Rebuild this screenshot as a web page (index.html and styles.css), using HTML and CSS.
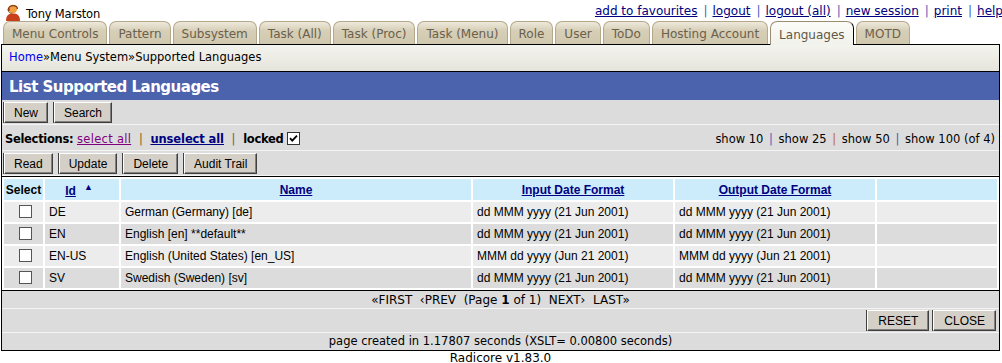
FILE: index.html
```html
<!DOCTYPE html>
<html>
<head>
<meta charset="utf-8">
<link rel="stylesheet" href="styles.css">
</head>
<body>
<div class="topbar">
  <div class="user">
    <svg class="usericon" width="16" height="18" viewBox="0 0 16 18">
      <path d="M1 18 C1 12 4 10.5 8 10.5 C12 10.5 15 12 15 18 Z" fill="#c8401a"/>
      <circle cx="8" cy="6" r="4.2" fill="#f0a040"/>
      <path d="M3.6 6 C3.6 1.5 12.4 1.5 12.4 6" fill="none" stroke="#8a3a10" stroke-width="1.3"/>
      <rect x="2.6" y="5.2" width="2" height="3" rx="0.8" fill="#8a3a10"/>
      <path d="M3.6 8 C4 10 6 10.5 7.5 10.2" fill="none" stroke="#8a3a10" stroke-width="0.9"/>
    </svg>
    <span class="uname">Tony Marston</span>
  </div>
  <div class="toplinks">
    <a href="#">add to favourites</a><span class="sep">|</span><a href="#">logout</a><span class="sep">|</span><a href="#">logout (all)</a><span class="sep">|</span><a href="#">new session</a><span class="sep">|</span><a href="#">print</a><span class="sep">|</span><a href="#">help</a>
  </div>
</div>
<div class="tabs">
  <span class="tab">Menu Controls</span>
  <span class="tab">Pattern</span>
  <span class="tab">Subsystem</span>
  <span class="tab">Task (All)</span>
  <span class="tab">Task (Proc)</span>
  <span class="tab">Task (Menu)</span>
  <span class="tab">Role</span>
  <span class="tab">User</span>
  <span class="tab">ToDo</span>
  <span class="tab">Hosting Account</span>
  <span class="tab active">Languages</span>
  <span class="tab">MOTD</span>
</div>
<div class="main">
  <div class="crumbs"><a href="#">Home</a>»Menu System»Supported Languages</div>
  <div class="panel">
    <div class="title">List Supported Languages</div>
    <div class="bar buttons">
      <button class="btn">New</button><button class="btn">Search</button>
    </div>
    <div class="bar selections">
      <div class="sel-left">
        <b>Selections:</b> <a href="#" class="visited">select all</a> <span class="sep">|</span> <a href="#" class="unsel">unselect all</a> <span class="sep">|</span> <b>locked</b>
        <span class="cb checked"><svg width="11" height="11" viewBox="0 0 11 11"><path d="M2 5.2 L4.3 7.6 L9 2.6" fill="none" stroke="#000" stroke-width="1.8"/></svg></span>
      </div>
      <div class="sel-right">show 10 <span class="sep">|</span> show 25 <span class="sep orange">|</span> show 50 <span class="sep">|</span> show 100 (of 4)</div>
    </div>
    <div class="bar buttons">
      <button class="btn">Read</button><button class="btn">Update</button><button class="btn">Delete</button><button class="btn">Audit Trail</button>
    </div>
    <table class="list">
      <colgroup>
        <col class="w-sel"><col class="w-id"><col class="w-name"><col class="w-fmt"><col class="w-fmt"><col>
      </colgroup>
      <thead>
        <tr>
          <th class="c-sel">Select</th>
          <th class="c-id"><a href="#">Id</a><span class="sort">▲</span></th>
          <th><a href="#">Name</a></th>
          <th><a href="#">Input Date Format</a></th>
          <th><a href="#">Output Date Format</a></th>
          <th></th>
        </tr>
      </thead>
      <tbody>
        <tr class="odd"><td class="c-sel"><span class="cb"></span></td><td>DE</td><td>German (Germany) [de]</td><td>dd MMM yyyy (21 Jun 2001)</td><td>dd MMM yyyy (21 Jun 2001)</td><td></td></tr>
        <tr class="even"><td class="c-sel"><span class="cb"></span></td><td>EN</td><td>English [en] **default**</td><td>dd MMM yyyy (21 Jun 2001)</td><td>dd MMM yyyy (21 Jun 2001)</td><td></td></tr>
        <tr class="odd"><td class="c-sel"><span class="cb"></span></td><td>EN-US</td><td>English (United States) [en_US]</td><td>MMM dd yyyy (Jun 21 2001)</td><td>MMM dd yyyy (Jun 21 2001)</td><td></td></tr>
        <tr class="even"><td class="c-sel"><span class="cb"></span></td><td>SV</td><td>Swedish (Sweden) [sv]</td><td>dd MMM yyyy (21 Jun 2001)</td><td>dd MMM yyyy (21 Jun 2001)</td><td></td></tr>
      </tbody>
    </table>
    <div class="bar pager">«FIRST&nbsp;&nbsp;‹PREV&nbsp;&nbsp;(Page <b>1</b> of 1)&nbsp;&nbsp;NEXT›&nbsp;&nbsp;LAST»</div>
    <div class="bar actions">
      <button class="btn">RESET</button><button class="btn">CLOSE</button>
    </div>
    <div class="bar timing">page created in 1.17807 seconds (XSLT= 0.00800 seconds)</div>
  </div>
</div>
<div class="version">Radicore v1.83.0</div>
</body>
</html>
```
FILE: styles.css
```css
* { box-sizing: border-box; }
body {
  margin: 0;
  padding: 0 2px 0 1px;
  background: #fff;
  font-family: "DejaVu Sans", Verdana, sans-serif;
  font-size: 11.5px;
  color: #000;
}
.topbar {
  display: flex;
  justify-content: space-between;
  align-items: flex-end;
  height: 21px;
}
.user {
  display: flex;
  align-items: center;
  gap: 5px;
  padding-left: 4px;
  font-size: 11.5px;
}
.uname { padding-top: 4px; letter-spacing: -0.2px; }
.usericon { display: block; }
.toplinks { font-size: 12px; padding-bottom: 3px; margin-right: -3px; }
.toplinks a { color: #000080; text-decoration: underline; }
.toplinks .sep { color: #4060c0; margin: 0 5px 0 6px; }

.tabs {
  display: flex;
  gap: 2px;
  padding-left: 2px;
  height: 24px;
  align-items: flex-end;
  border-bottom: 1px solid #000;
}
.tab {
  height: 23px;
  padding: 5px 8px 0 8px;
  font-size: 12px;
  color: #6b604c;
  background: linear-gradient(#eee9dc, #d6ceb6 40%, #d0c8ae);
  border: 1px solid #b6a88a;
  border-bottom: none;
  border-radius: 7px 7px 0 0;
  white-space: nowrap;
}
.tab.active {
  background: linear-gradient(#fbfbf8, #f2f2ec);
  color: #605848;
  height: 24px;
  padding-top: 6px;
  margin-bottom: -1px;
  border-color: #9a8c70;
  border-right-color: #000;
  position: relative;
}

.main {
  border-left: 1px solid #000;
  border-right: 1px solid #000;
  border-bottom: 1px solid #000;
}
.crumbs {
  height: 27px;
  padding: 5px 0 0 7px;
  background: linear-gradient(#f4f4ef, #ebebe3 60%, #e5e5dc);
  border-bottom: 1px solid #000;
}
.crumbs a { color: #0000ee; text-decoration: none; }

.panel { background: #dcdcdc; }
.title {
  height: 28px;
  background: #4b62ad;
  color: #fff;
  font-weight: bold;
  font-size: 15px;
  letter-spacing: -0.5px;
  padding: 6px 0 0 7px;
}
.bar {
  background: #dcdcdc;
  border-bottom: 1px solid #f4f4f4;
}
.buttons {
  display: flex;
  gap: 6px;
  padding: 2px 2px 1px 2px;
}
.btn {
  font-family: "Liberation Sans", Arial, sans-serif;
  font-size: 12px;
  color: #000;
  background: #d4d0c8;
  height: 21px;
  padding: 0 9px;
  border: 1px solid;
  border-color: #ffffff #404040 #404040 #ffffff;
  box-shadow: inset -1px -1px 0 #808080, -1px 0 0 #404040;
}
.actions .btn { padding: 0 10px; }
.selections {
  display: flex;
  justify-content: space-between;
  align-items: center;
  height: 26px;
  padding: 2px 4px 0 3px;
}
.sel-left b { font-weight: bold; letter-spacing: -0.3px; }
.sel-left a.visited { color: #800080; letter-spacing: 0.3px; }
.sel-left a.unsel { color: #000080; font-weight: bold; letter-spacing: -0.1px; }
.sel-left .sep { color: #806020; margin: 0 4px; }
.sel-right .sep { color: #4060c0; margin: 0 2px; }
.sel-right .sep.orange { color: #c07020; }
.cb {
  display: inline-block;
  width: 13px;
  height: 13px;
  background: #fff;
  border: 1px solid #333;
  vertical-align: -2px;
  position: relative;
}
.cb svg { position: absolute; left: 0; top: 0; }

table.list {
  width: 100%;
  table-layout: fixed;
  border-top: 1px solid #000;
  border-bottom: 1px solid #000;
  border-collapse: separate;
  border-spacing: 2px;
  background: #ffffff;
  font-family: "Liberation Sans", Arial, sans-serif;
  font-size: 12px;
}
col.w-sel { width: 39px; }
col.w-id { width: 74px; }
col.w-name { width: 350px; }
col.w-fmt { width: 200px; }
table.list th {
  background: #ccebfb;
  height: 21px;
  font-weight: bold;
  padding: 0 3px;
  white-space: nowrap;
}
table.list th a { color: #000080; }
table.list th.c-sel { padding: 0; }
table.list th.c-id { padding-right: 9px; }
.sort { font-size: 9px; color: #000080; vertical-align: 5px; margin-left: 8px; }
table.list td { height: 20px; padding: 0 4px; }
table.list td.c-sel { text-align: center; padding-left: 8px; }
tr.odd td { background: #ececec; }
tr.even td { background: #dcdcdc; }
table.list td .cb { border-color: #555; }

.pager {
  text-align: center;
  height: 18px;
  padding-top: 2px;
  font-size: 12px;
}
.actions {
  display: flex;
  justify-content: flex-end;
  gap: 4px;
  padding: 1px 3px 1px;
}
.timing {
  text-align: center;
  height: 17px;
  padding-top: 1px;
  border-bottom: none;
}
.version {
  text-align: center;
  font-size: 12px;
  line-height: 13px;
  padding-top: 1px;
}
```
